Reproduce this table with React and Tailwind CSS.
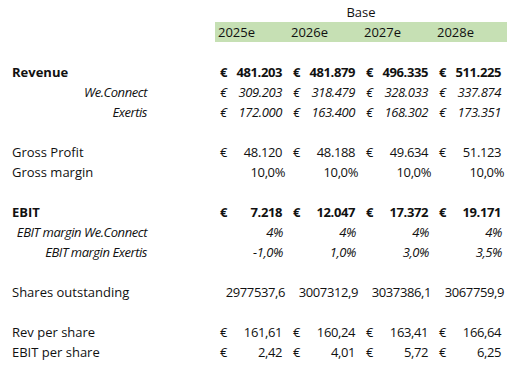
const YEARS = ['2025e', '2026e', '2027e', '2028e']

const ROWS = [
  { type: 'empty' },
  { label: 'Revenue', bold: true, euro: true, values: ['481.203', '481.879', '496.335', '511.225'] },
  { label: 'We.Connect', italic: true, right: true, euro: true, values: ['309.203', '318.479', '328.033', '337.874'] },
  { label: 'Exertis', italic: true, right: true, euro: true, values: ['172.000', '163.400', '168.302', '173.351'] },
  { type: 'empty' },
  { label: 'Gross Profit', euro: true, values: ['48.120', '48.188', '49.634', '51.123'] },
  { label: 'Gross margin', pad: 'pr-[3px]', values: ['10,0%', '10,0%', '10,0%', '10,0%'] },
  { type: 'empty' },
  { label: 'EBIT', bold: true, euro: true, values: ['7.218', '12.047', '17.372', '19.171'] },
  { label: 'EBIT margin We.Connect', italic: true, right: true, pad: 'pr-[5px]', values: ['4%', '4%', '4%', '4%'] },
  { label: 'EBIT margin Exertis', italic: true, right: true, pad: 'pr-[5px]', values: ['-1,0%', '1,0%', '3,0%', '3,5%'] },
  { type: 'empty' },
  { label: 'Shares outstanding', pad: 'pr-[3px]', values: ['2977537,6', '3007312,9', '3037386,1', '3067759,9'] },
  { type: 'empty' },
  { label: 'Rev per share', euro: true, values: ['161,61', '160,24', '163,41', '166,64'] },
  { label: 'EBIT per share', euro: true, values: ['2,42', '4,01', '5,72', '6,25'] },
]

function Row({ row }) {
  if (row.type === 'empty') {
    return <div className="h-5" />
  }
  const style = (row.bold ? 'font-bold ' : '') + (row.italic ? 'italic' : '')
  return (
    <div className={'flex h-5 items-center ' + style}>
      <div className="w-[215px]">
        {row.right ? (
          <div className="w-[147px] text-right tracking-[-0.45px]">{row.label}</div>
        ) : (
          <div className="pl-3">{row.label}</div>
        )}
      </div>
      {row.values.map((v, i) => (
        <div key={i} className="flex w-[73px] justify-between tracking-[-0.4px]">
          {row.euro ? (
            <>
              <span className="pl-[5px]">€</span>
              <span className="pr-[6px]">{v}</span>
            </>
          ) : (
            <span className={'ml-auto ' + row.pad}>{v}</span>
          )}
        </div>
      ))}
    </div>
  )
}

export default function App() {
  return (
    <div className="w-[516px] h-[365px] bg-white pt-[2px] text-[13px] leading-5 text-[#111]" style={{ fontFamily: '"Open Sans", sans-serif' }}>
      <div className="flex h-5">
        <div className="w-[215px]" />
        <div className="w-[292px] text-center">Base</div>
      </div>
      <div className="flex h-5">
        <div className="w-[215px]" />
        <div className="flex w-[292px] bg-[#c6e0b4]">
          {YEARS.map((y) => (
            <div key={y} className="w-[73px] pl-[3px]">{y}</div>
          ))}
        </div>
      </div>
      {ROWS.map((row, i) => (
        <Row key={i} row={row} />
      ))}
    </div>
  )
}
